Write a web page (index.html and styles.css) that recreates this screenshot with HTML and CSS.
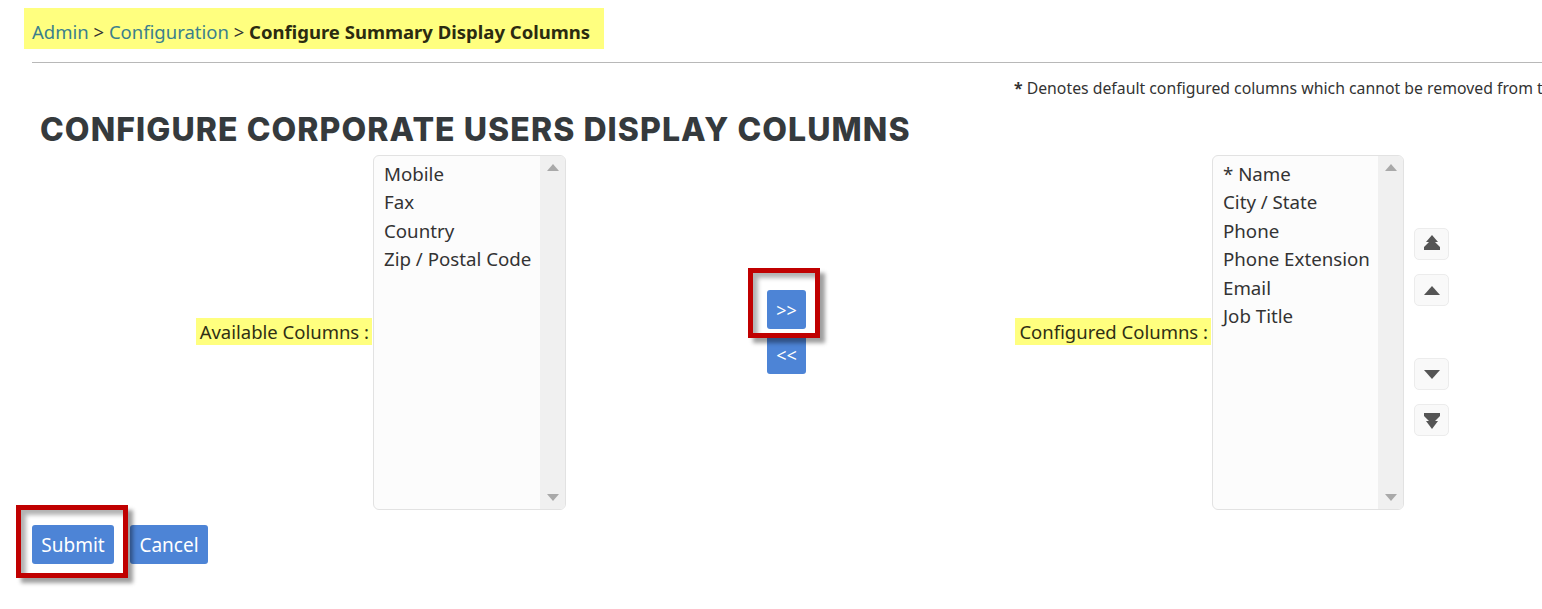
FILE: index.html
```html
<!DOCTYPE html>
<html lang="en">
<head>
<meta charset="utf-8">
<title>Configure Summary Display Columns</title>
<link rel="stylesheet" href="styles.css">
</head>
<body>
<nav class="crumbs"><a href="#">Admin</a> &gt; <a href="#">Configuration</a> &gt; <b>Configure Summary Display Columns</b></nav>
<hr class="rule">
<p class="note"><b>*</b> Denotes default configured columns which cannot be removed from the</p>
<h1 class="title">CONFIGURE CORPORATE USERS DISPLAY COLUMNS</h1>
<form class="picker">
  <div class="label-cell available"><span class="mark">Available Columns :</span></div>
  <div class="listbox listbox-wide">
    <ul class="items"><li>Mobile</li><li>Fax</li><li>Country</li><li>Zip / Postal Code</li></ul>
    <div class="scrollbar"><i class="sb-up"></i><i class="sb-down"></i></div>
  </div>
  <div class="transfer">
    <div class="framed">
      <button type="button" class="btn btn-small">&gt;&gt;</button>
      <span class="frame frame-move"></span>
    </div>
    <button type="button" class="btn btn-small">&lt;&lt;</button>
  </div>
  <div class="label-cell configured"><span class="mark">Configured Columns :</span></div>
  <div class="listbox">
    <ul class="items"><li>* Name</li><li>City / State</li><li>Phone</li><li>Phone Extension</li><li>Email</li><li>Job Title</li></ul>
    <div class="scrollbar"><i class="sb-up"></i><i class="sb-down"></i></div>
  </div>
  <div class="order">
    <div class="order-group">
      <button type="button" class="arrow" aria-label="Move to top"><svg viewBox="0 0 18 18" width="18" height="18"><path d="M9 0 15 7H12L17 12V15H1V12L6 7H3Z"/></svg></button>
      <button type="button" class="arrow" aria-label="Move up"><svg viewBox="0 0 18 18" width="18" height="18"><path d="M9 5 17 14H1Z"/></svg></button>
    </div>
    <div class="order-group">
      <button type="button" class="arrow" aria-label="Move down"><svg viewBox="0 0 18 18" width="18" height="18"><path d="M1 5H17L9 14Z"/></svg></button>
      <button type="button" class="arrow" aria-label="Move to bottom"><svg viewBox="0 0 18 18" width="18" height="18"><path d="M1 2H17V5L12 10H15L9 18 3 10H6L1 5Z"/></svg></button>
    </div>
  </div>
</form>
<div class="actions">
  <div class="framed">
    <button type="button" class="btn btn-submit">Submit</button>
    <span class="frame frame-submit"></span>
  </div>
  <button type="button" class="btn btn-cancel">Cancel</button>
</div>
</body>
</html>
```
FILE: styles.css
```css
html, body {
  margin: 0;
  padding: 0;
  background: #fff;
  overflow: hidden;
}
body {
  width: 1542px;
  height: 609px;
  font-family: "Noto Sans", sans-serif;
  color: #333;
  font-size: 17px;
}
.crumbs {
  box-sizing: border-box;
  width: 580px;
  height: 41px;
  margin: 8px 0 0 24px;
  padding-left: 8px;
  background: #ffff7f;
  line-height: 48px;
  font-size: 18.5px;
  white-space: nowrap;
  color: #333;
}
.crumbs a {
  color: #3b7f8c;
  text-decoration: none;
}
.crumbs b {
  color: #2b2b10;
  font-weight: 700;
}
.rule {
  height: 1px;
  margin: 13px 0 0 32px;
  border: 0;
  background: #b8b8b8;
}
.note {
  margin: 15px 0 0 1014px;
  font-size: 15.8px;
  line-height: 20px;
  white-space: nowrap;
}
.title {
  margin: 12px 0 0 40px;
  font-family: Inter, sans-serif;
  font-weight: 800;
  font-size: 32px;
  letter-spacing: 1.07px;
  line-height: 40px;
  color: #353a3d;
  white-space: nowrap;
}
.picker {
  display: flex;
  margin-top: 5px;
  height: 355px;
}
.label-cell {
  box-sizing: border-box;
  display: flex;
  align-items: center;
  justify-content: flex-end;
  flex: none;
  padding-bottom: 2px;
}
.label-cell.available {
  width: 372px;
  margin-right: 1px;
}
.label-cell.configured {
  width: 192px;
  margin-right: 1px;
}
.mark {
  background: #ffff7f;
  color: #2f2f14;
  font-size: 18.5px;
  line-height: 27px;
  padding: 0 3px 0 4px;
  white-space: nowrap;
}
.listbox {
  flex: none;
  box-sizing: border-box;
  width: 192px;
  height: 355px;
  display: flex;
  border: 1px solid #e2e2e2;
  border-radius: 6px;
  background: #fcfcfc;
  overflow: hidden;
}
.listbox-wide {
  width: 193px;
}
.items {
  flex: 1;
  margin: 0;
  padding: 4px 0 0 10px;
  list-style: none;
  font-size: 18.7px;
  line-height: 28.4px;
  white-space: nowrap;
}
.scrollbar {
  flex: none;
  width: 25px;
  background: #f0f0f0;
  display: flex;
  flex-direction: column;
  justify-content: space-between;
  align-items: center;
  padding: 8px 0;
}
.sb-up, .sb-down {
  width: 0;
  height: 0;
  border-left: 6px solid transparent;
  border-right: 6px solid transparent;
}
.sb-up { border-bottom: 7px solid #a9a9a9; }
.sb-down { border-top: 7px solid #a9a9a9; }
.transfer {
  flex: none;
  box-sizing: border-box;
  width: 453px;
  padding: 135px 0 0 201px;
  display: flex;
  flex-direction: column;
  gap: 6px;
}
.framed {
  position: relative;
  width: fit-content;
}
.btn {
  display: block;
  height: 39px;
  padding: 0;
  border: 0;
  border-radius: 3px;
  background: #4d84d6;
  color: #fff;
  font-family: "Noto Sans", sans-serif;
  font-size: 19px;
}
.btn-submit {
  width: 82px;
}
.btn-cancel {
  width: 78px;
}
.btn-small {
  width: 39px;
  font-size: 18px;
}
.frame {
  position: absolute;
  box-sizing: border-box;
  border: 5px solid #c00000;
  box-shadow: 5px 5px 4px rgba(0, 0, 0, 0.38), inset 5px 5px 4px rgba(0, 0, 0, 0.3);
  pointer-events: none;
}
.frame-move {
  top: -22px;
  right: -14px;
  bottom: -9px;
  left: -19px;
}
.frame-submit {
  top: -20px;
  right: -14px;
  bottom: -14px;
  left: -16px;
}
.order {
  flex: none;
  margin-left: 10px;
  padding-top: 73px;
  display: flex;
  flex-direction: column;
  gap: 52px;
}
.order-group {
  display: flex;
  flex-direction: column;
  gap: 14px;
}
.arrow {
  display: flex;
  align-items: center;
  justify-content: center;
  width: 35px;
  height: 32px;
  padding: 0;
  border: 1px solid #ececec;
  border-radius: 5px;
  background: #f9f9f9;
}
.arrow svg {
  fill: #555;
}
.actions {
  display: flex;
  gap: 16px;
  margin: 15px 0 0 32px;
}
```
